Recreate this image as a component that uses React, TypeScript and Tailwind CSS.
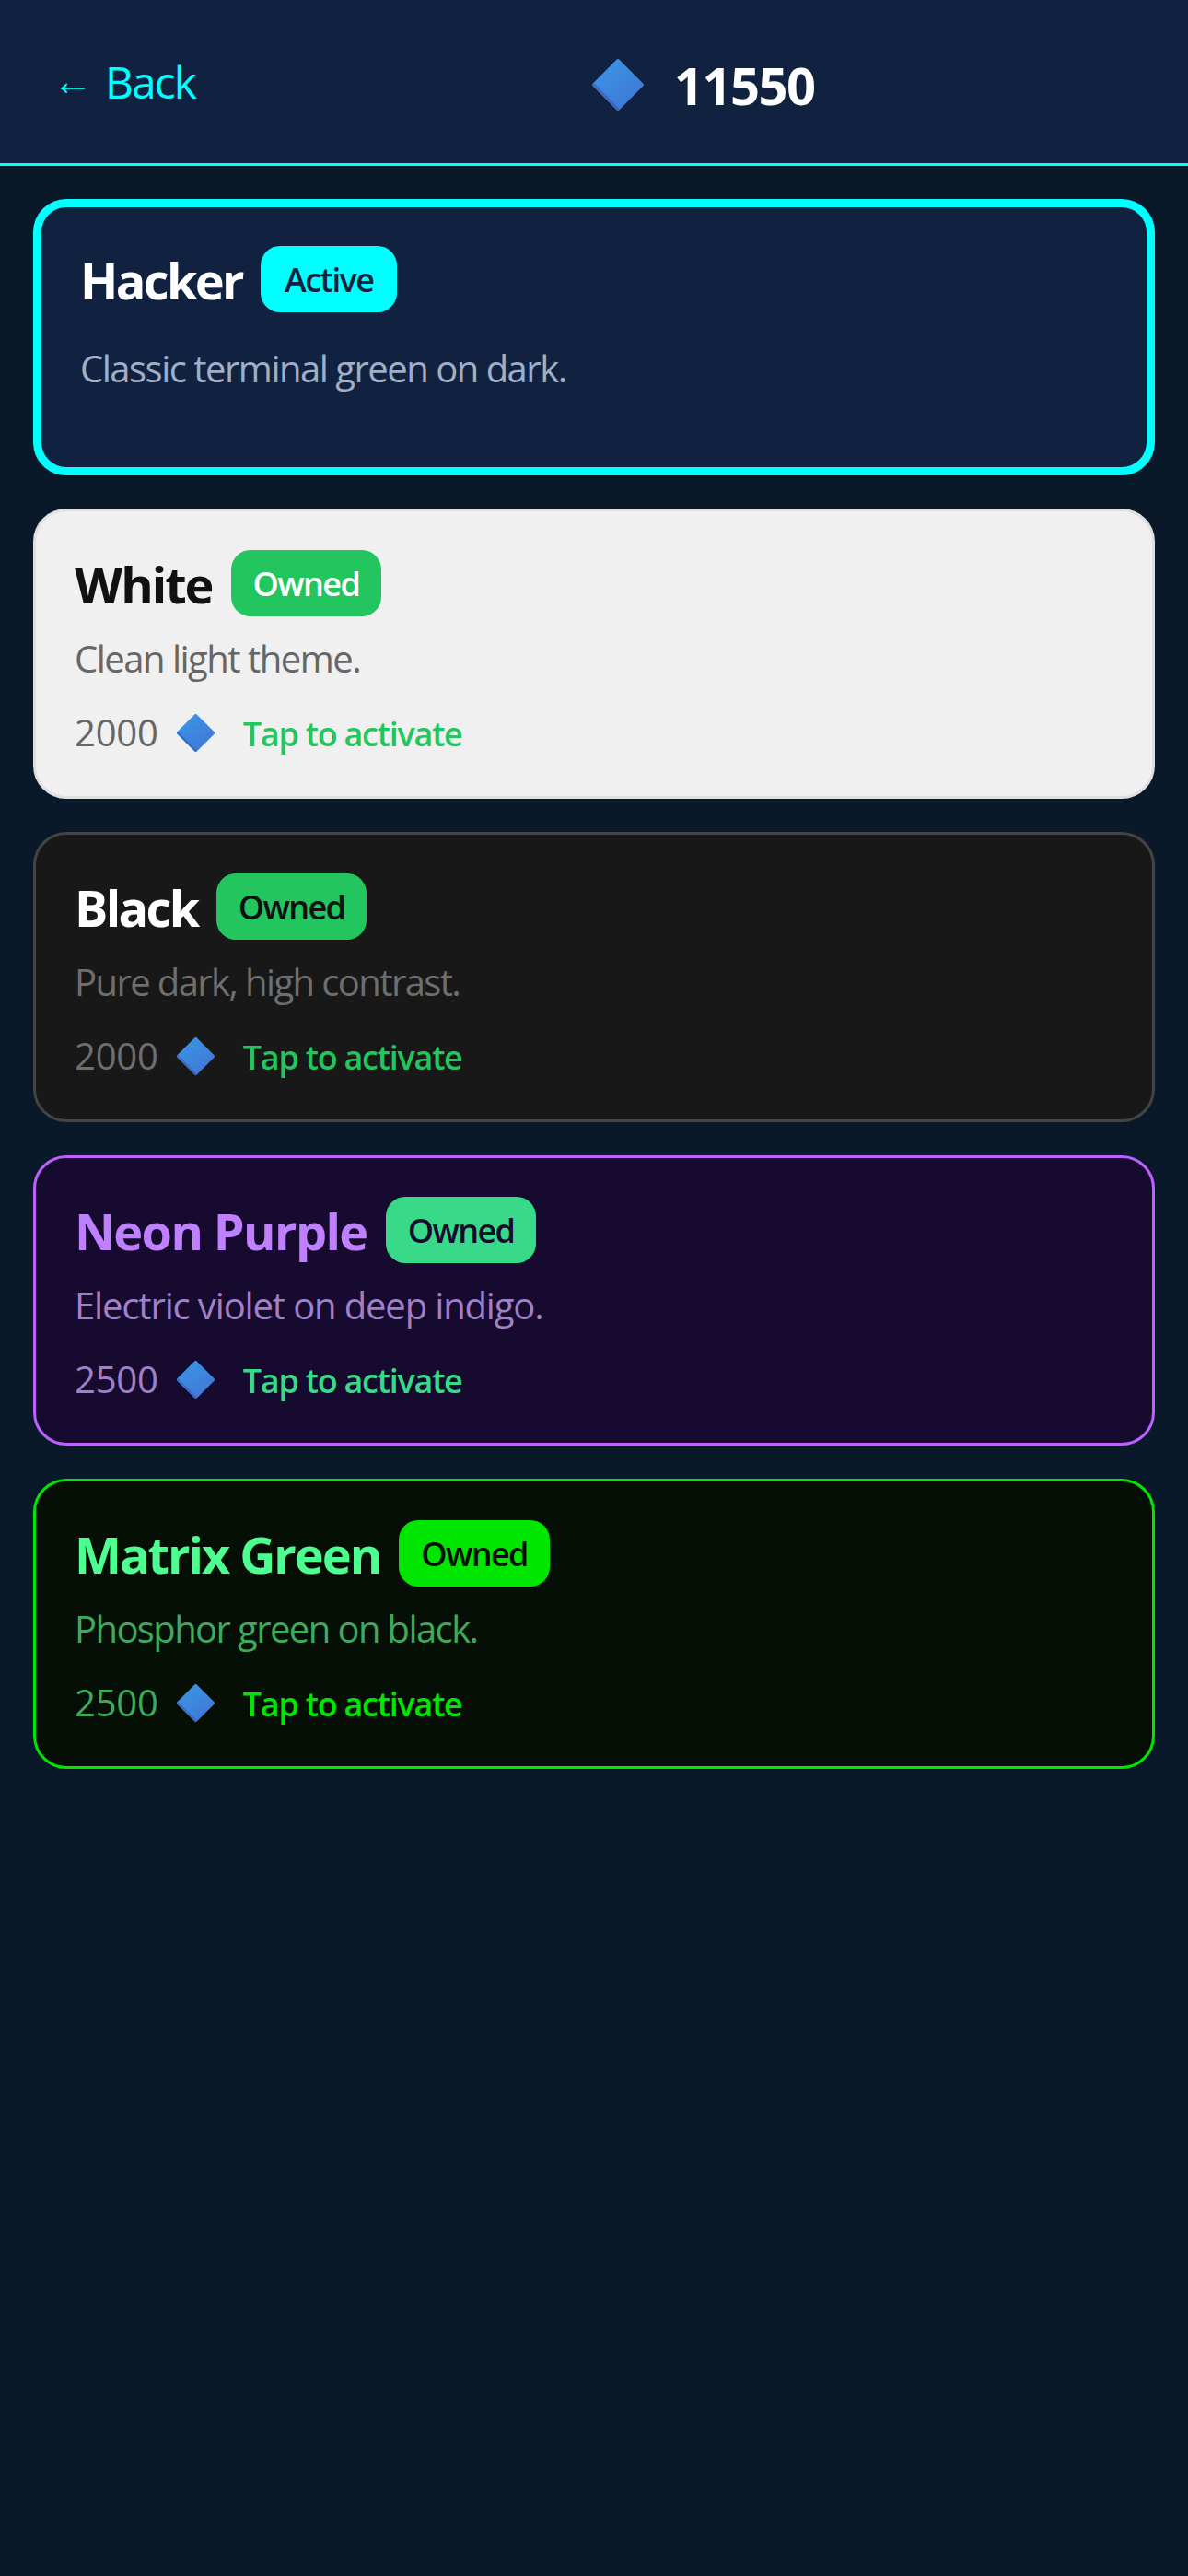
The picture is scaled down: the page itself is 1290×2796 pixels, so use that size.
import React from 'react';

function Diamond({ className }: { className: string }) {
  return (
    <svg viewBox="0 0 40 40" className={className}>
      <defs>
        <linearGradient id="gem" x1="0.15" y1="0.05" x2="0.85" y2="0.95">
          <stop offset="0" stopColor="#3b94e6" />
          <stop offset="1" stopColor="#4077d6" />
        </linearGradient>
      </defs>
      <path d="M20 2 L38 20 L20 38 L2 20 Z" fill="url(#gem)" stroke="url(#gem)" strokeWidth="2.5" strokeLinejoin="round" />
      <path d="M2 20 L20 38" stroke="#3a5fc0" strokeWidth="2" strokeLinecap="round" opacity="0.7" />
    </svg>
  );
}

const themes = [
  {
    name: 'White',
    desc: 'Clean light theme.',
    price: 2000,
    card: 'bg-[#f0f0f0] border-[#e0e0e0]',
    title: 'text-[#111111] tracking-[-2px]',
    badge: 'bg-[#22c55e] text-white',
    muted: 'text-[#666666]',
    descTrack: 'tracking-[-1.5px]',
    tap: 'text-[#22c55e]',
  },
  {
    name: 'Black',
    desc: 'Pure dark, high contrast.',
    price: 2000,
    card: 'bg-[#181818] border-[#444444]',
    title: 'text-white tracking-[-2.6px]',
    badge: 'bg-[#22c55e] text-[#111111]',
    muted: 'text-[#6e6e6e]',
    descTrack: 'tracking-[-1.6px]',
    tap: 'text-[#22c55e]',
  },
  {
    name: 'Neon Purple',
    desc: 'Electric violet on deep indigo.',
    price: 2500,
    card: 'bg-[#160b2e] border-[#bf5fff]',
    title: 'text-[#bf80ff] tracking-[-1.6px]',
    badge: 'bg-[#39d98a] text-[#160b2e]',
    muted: 'text-[#a080c8]',
    descTrack: 'tracking-[-1.15px]',
    tap: 'text-[#39d98a]',
  },
  {
    name: 'Matrix Green',
    desc: 'Phosphor green on black.',
    price: 2500,
    card: 'bg-[#050f05] border-[#00e600]',
    title: 'text-[#4dff91] tracking-[-2px]',
    badge: 'bg-[#00e600] text-[#050f05]',
    muted: 'text-[#3daa5c]',
    descTrack: 'tracking-[-1.6px]',
    tap: 'text-[#00e600]',
  },
];

export default function App() {
  return (
    <div className="min-h-[2796px] bg-[#0a1929] font-['Open_Sans','Noto_Sans',sans-serif]">
      <header className="h-[180px] bg-[#112240] border-b-[3px] border-[#00ffff] flex items-center pl-[57px] gap-[430px]">
        <span className="flex items-center gap-[15px] text-[48px] text-[#00ffff] tracking-[-2px]">
          <span className="text-[44px] -translate-y-[3px]">←</span>
          <span>Back</span>
        </span>
        <div className="flex items-center gap-[32px] pt-[6px]">
          <Diamond className="w-[58px] h-[58px]" />
          <span className="text-[56px] font-bold text-white tracking-[-1.5px]">11550</span>
        </div>
      </header>

      <main className="p-[36px] flex flex-col gap-[36px]">
        <div className="h-[300px] rounded-[36px] border-[9px] border-[#00ffff] bg-[#112240] px-[42px] pt-[42px]">
          <div className="flex items-center gap-[20px]">
            <h2 className="pt-[2px] text-[54px] font-bold text-white tracking-[-2.6px] leading-[70px]">Hacker</h2>
            <span className="h-[72px] pt-[2px] px-[26px] rounded-[21px] bg-[#00ffff] text-[#112240] text-[36px] font-semibold tracking-[-1.6px] flex items-center">Active</span>
          </div>
          <p className="mt-[34px] text-[40px] text-[#a0aec8] tracking-[-1.5px] leading-[54px]">Classic terminal green on dark.</p>
        </div>

        {themes.map((t) => (
          <div key={t.name} className={`h-[315px] rounded-[36px] border-[3px] px-[42px] pt-[42px] ${t.card}`}>
            <div className="flex items-center gap-[20px]">
              <h2 className={`pt-[2px] text-[54px] font-bold leading-[70px] ${t.title}`}>{t.name}</h2>
              <span className={`h-[72px] pt-[2px] px-[24px] rounded-[21px] text-[36px] font-semibold tracking-[-1.6px] flex items-center ${t.badge}`}>Owned</span>
            </div>
            <p className={`mt-[19px] text-[40px] leading-[54px] ${t.muted} ${t.descTrack}`}>{t.desc}</p>
            <div className="mt-[24px] flex items-center">
              <span className={`text-[40px] tracking-[-0.2px] leading-[54px] ${t.muted}`}>{t.price}</span>
              <Diamond className="ml-[19px] w-[43px] h-[43px]" />
              <span className={`ml-[30px] pt-[4px] text-[36px] font-semibold tracking-[-1.25px] ${t.tap}`}>Tap to activate</span>
            </div>
          </div>
        ))}
      </main>
    </div>
  );
}
